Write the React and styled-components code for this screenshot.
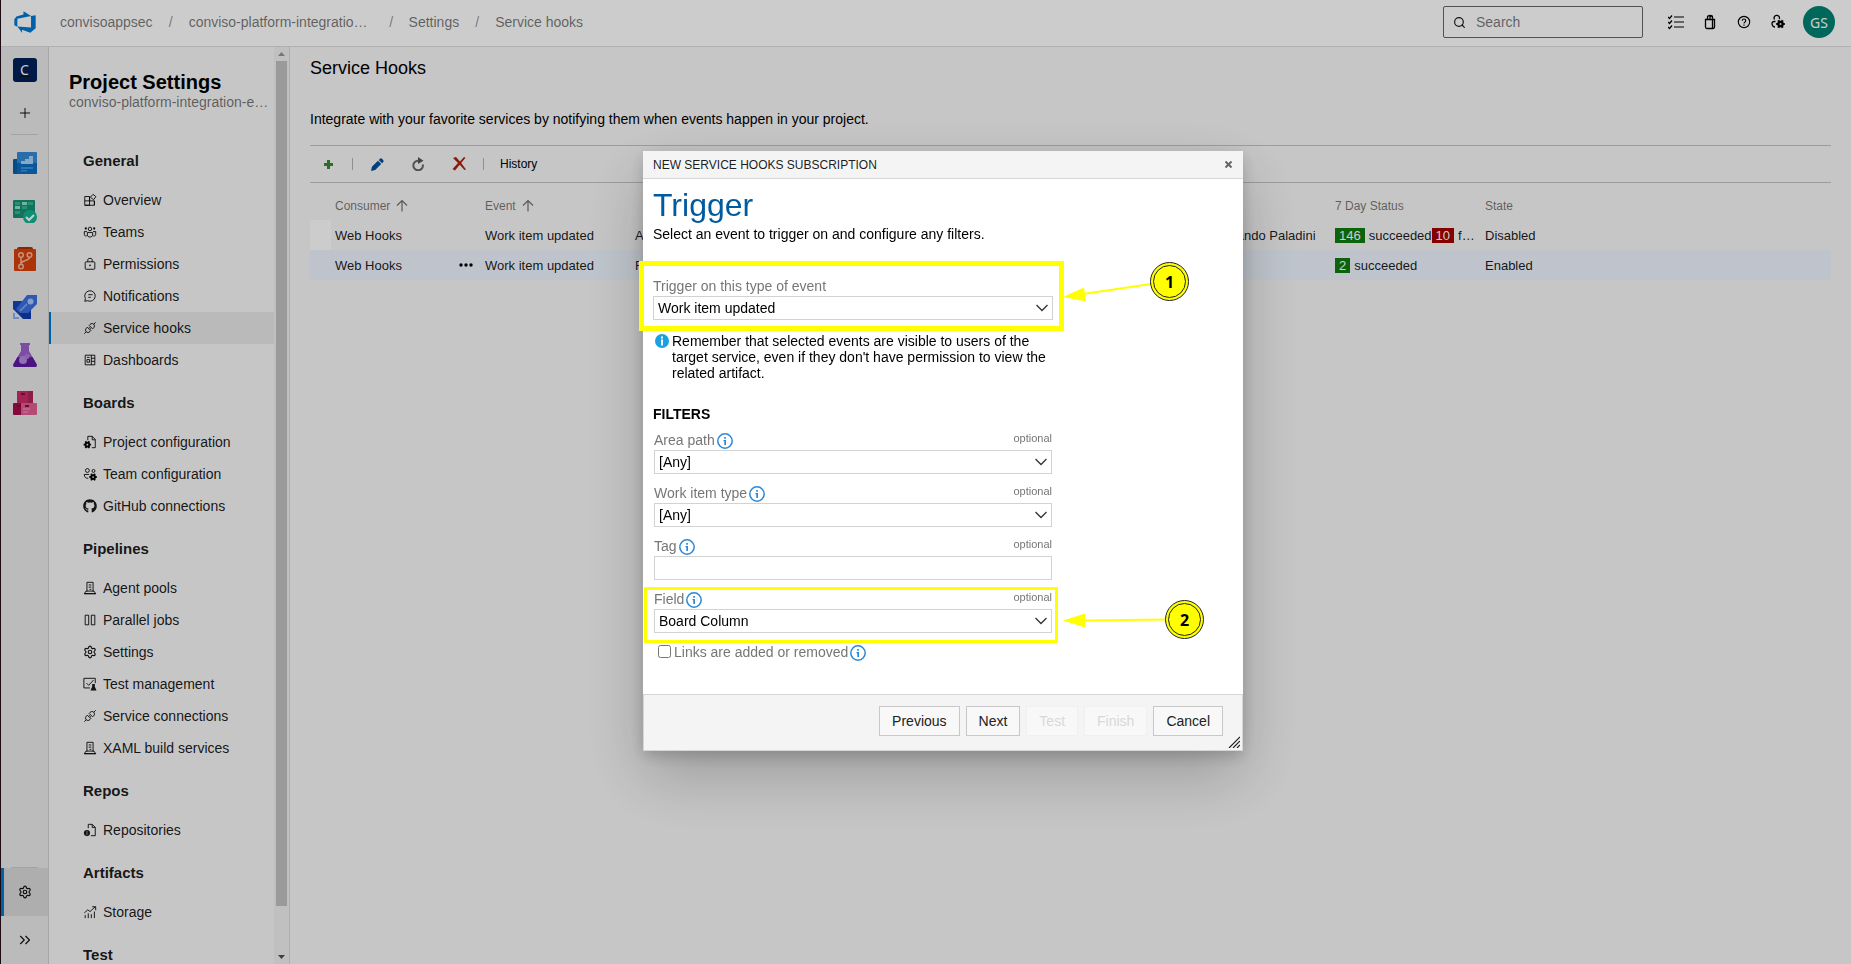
import React from "react";
import styled, { createGlobalStyle, css } from "styled-components";
import { Settings, Search, Plus, ChevronsRight } from "lucide-react";
import { FaGithub } from "react-icons/fa";

const GlobalStyle = createGlobalStyle`
  *, *::before, *::after { box-sizing: border-box; }
  body { margin: 0; font-family: "Liberation Sans", Arial, sans-serif; font-size: 14px; color: rgba(0, 0, 0, 0.9); }
  h1, h2, h3, p, ul { margin: 0; padding: 0; }
  ul { list-style: none; }
  button, input, select { font-family: inherit; font-size: 14px; }
  svg { display: block; flex: none; }
`;

/* ---------- frame ---------- */
const Shell = styled.div`
  height: 100vh;
  display: flex;
  flex-direction: column;
  overflow: hidden;
  background: #f8f8f8;
  border-left: 1px solid #1c0a14;
`;
const TopBar = styled.header`
  height: 47px;
  flex: none;
  display: flex;
  align-items: center;
  justify-content: space-between;
  padding: 0 16px 2px 12px;
  background: #fff;
  border-bottom: 1px solid #dcdcdc;
`;
const Body = styled.div`
  flex: 1;
  min-height: 0;
  display: flex;
`;

/* ---------- top bar ---------- */
const Crumbs = styled.nav`
  display: flex;
  align-items: center;
`;
const Logo = styled.a`
  margin-right: 23px;
`;
const Crumb = styled.a`
  color: rgba(0, 0, 0, 0.55);
  text-decoration: none;
  white-space: nowrap;
`;
const Slash = styled.span`
  width: ${(p) => (p.$wide ? 41 : 36)}px;
  text-align: center;
  padding-left: ${(p) => (p.$wide ? 6 : 0)}px;
  color: rgba(0, 0, 0, 0.45);
`;
const Tools = styled.div`
  display: flex;
  align-items: center;
`;
const SearchBox = styled.label`
  width: 200px;
  height: 32px;
  margin-right: 16px;
  padding: 0 9px;
  display: flex;
  align-items: center;
  gap: 10px;
  border: 1px solid rgba(0, 0, 0, 0.6);
  border-radius: 2px;
`;
const SearchInput = styled.input`
  flex: 1;
  min-width: 0;
  padding: 0;
  border: 0;
  outline: 0;
  background: none;
  &::placeholder { color: rgba(0, 0, 0, 0.55); }
`;
const ToolButton = styled.button`
  width: 34px;
  height: 32px;
  padding: 0;
  display: grid;
  place-items: center;
  border: 0;
  background: none;
  color: #000;
`;
const Avatar = styled.button`
  width: 32px;
  height: 32px;
  margin-left: 8px;
  padding: 0;
  border: 0;
  border-radius: 50%;
  background: #008272;
  color: #fff;
  font-family: "Noto Sans", sans-serif;
`;

/* ---------- icon rail ---------- */
const Rail = styled.nav`
  width: 48px;
  flex: none;
  display: flex;
  flex-direction: column;
  background: #eaeaea;
  border-right: 1px solid #d0d0d0;
`;
const RailLink = styled.a`
  height: ${(p) => p.$height || 48}px;
  flex: none;
  display: grid;
  place-items: center;
  color: #111;
  background: ${(p) => (p.$selected ? "#dadada" : "none")};
  box-shadow: ${(p) => (p.$selected ? "inset 3px 0 #0078d4" : "none")};
`;
const ProjectTile = styled.span`
  width: 24px;
  height: 24px;
  border-radius: 3px;
  background: #00215a;
  color: #fff;
  font: 14px/24px "Noto Sans", sans-serif;
  text-align: center;
`;
const RailRule = styled.span`
  width: 27px;
  height: 1px;
  margin: ${(p) => (p.$bottom ? "auto 10px 0" : "1px 10px 4px")};
  background: #ccc;
`;

/* ---------- settings side bar ---------- */
const Side = styled.aside`
  width: 241px;
  flex: none;
  display: flex;
  border-right: 1px solid #dcdcdc;
`;
const SideContent = styled.div`
  flex: 1;
  min-width: 0;
  overflow: hidden;
`;
const SideHead = styled.div`
  height: 87px;
  padding: 24px 5px 0 20px;
`;
const SideTitle = styled.h1`
  font-size: 20px;
  line-height: 23px;
  color: #000;
`;
const SideProject = styled.p`
  line-height: 17px;
  color: rgba(0, 0, 0, 0.55);
  white-space: nowrap;
`;
const GroupTitle = styled.h2`
  height: 50px;
  padding: 18px 0 0 34px;
  font-size: 15px;
  line-height: 18px;
`;
const NavItem = styled.a`
  height: 32px;
  padding-left: 34px;
  display: flex;
  align-items: center;
  gap: 6px;
  color: inherit;
  text-decoration: none;
  background: ${(p) => (p.$selected ? "#e9e9e9" : "none")};
  box-shadow: ${(p) => (p.$selected ? "inset 2px 0 #0078d4" : "none")};
`;
const ScrollBar = styled.div`
  width: 15px;
  display: flex;
  flex-direction: column;
  align-items: center;
  background: #f1f1f1;
`;
const ScrollArrow = styled.span`
  height: 14px;
  display: grid;
  place-items: center;
  color: ${(p) => (p.$dim ? "#949494" : "#505050")};
`;
const ScrollTrack = styled.div`
  flex: 1;
`;
const ScrollThumb = styled.div`
  width: 11px;
  height: 95%;
  background: #c1c1c1;
`;

/* ---------- main ---------- */
const Main = styled.main`
  flex: 1;
  min-width: 0;
  padding: 10px 20px 0;
`;
const PageTitle = styled.h2`
  font-size: 18px;
  line-height: 22px;
  font-weight: 400;
  color: #000;
`;
const Lead = styled.p`
  margin: 32px 0 18px;
  line-height: 16px;
  color: #000;
`;
const Toolbar = styled.div`
  height: 38px;
  display: flex;
  align-items: center;
  border: solid #c4c4c4;
  border-width: 1px 0;
`;
const ToolbarButton = styled.button`
  min-width: 36px;
  height: 30px;
  padding: 0;
  display: grid;
  place-items: center;
  border: 0;
  background: none;
  font-size: 12px;
  color: #000;
`;
const ToolbarRule = styled.span`
  width: 1px;
  height: 12px;
  margin: 0 ${(p) => p.$after || 0}px 0 6px;
  background: #b4b4b4;
`;
const ToolGroup = styled.div`
  display: flex;
  gap: 5px;
`;
const Table = styled.table`
  width: 100%;
  margin-top: 8px;
  table-layout: fixed;
  border-collapse: collapse;
`;
const Col = styled.col`
  width: ${(p) => (p.$width ? p.$width + "px" : "auto")};
`;
const HeadCell = styled.th`
  height: 29px;
  padding: 0 4px;
  text-align: left;
  font-size: 12px;
  font-weight: 400;
  color: rgba(0, 0, 0, 0.55);
`;
const Row = styled.tr`
  background: ${(p) => (p.$selected ? "#eff6ff" : "none")};
`;
const Cell = styled.td`
  height: 30px;
  padding: 0 4px;
  font-size: 13px;
  white-space: nowrap;
  overflow: hidden;
  text-overflow: ellipsis;
  background: ${(p) => (p.$light ? "#fff" : "none")};
`;
const Split = styled.div`
  display: flex;
  align-items: center;
  gap: 6px;
  justify-content: ${(p) => (p.$spread ? "space-between" : "flex-start")};
  padding-right: ${(p) => (p.$spread ? 4 : 0)}px;
`;
const Count = styled.span`
  display: inline-block;
  padding: 0 4px;
  margin-right: 4px;
  line-height: 15px;
  color: #fff;
  background: ${(p) => (p.$bad ? "#a80000" : "#107c10")};
`;

/* ---------- dialog ---------- */
const Overlay = styled.div`
  position: fixed;
  inset: 0 0 0 1px;
  display: flex;
  align-items: flex-start;
  justify-content: center;
  padding: 151px 0 0 34px;
  background: rgba(0, 0, 0, 0.2);
`;
const Dialog = styled.section`
  position: relative;
  width: 600px;
  background: #fff;
  box-shadow: 0 25px 58px rgba(0, 0, 0, 0.22), 0 5px 14px rgba(0, 0, 0, 0.18);
`;
const DialogBar = styled.header`
  height: 28px;
  padding: 0 10px;
  display: flex;
  align-items: center;
  justify-content: space-between;
  background: #f4f4f4;
  border-bottom: 1px solid #d6d6d6;
`;
const DialogTitle = styled.h2`
  font-size: 12px;
  font-weight: 400;
`;
const CloseButton = styled.button`
  width: 10px;
  height: 20px;
  padding: 0;
  display: grid;
  place-items: center;
  border: 0;
  background: none;
  color: #666;
`;
const DialogBody = styled.div`
  height: 515px;
  padding: 7px 10px 0;
  color: #000;
`;
const StepTitle = styled.h3`
  font-size: 32px;
  line-height: 38px;
  font-weight: 400;
  color: #005a9e;
`;
const StepText = styled.p`
  margin-top: 2px;
  line-height: 16px;
`;
const Form = styled.form`
  width: 400px;
`;
const marked = css`
  &::after {
    content: "";
    position: absolute;
    inset: ${(p) => p.$inset};
    border: ${(p) => p.$line}px solid #ff0;
    pointer-events: none;
  }
`;
const Field = styled.div`
  position: relative;
  height: ${(p) => p.$height || 53}px;
  ${(p) => p.$inset && marked}
`;
const EventField = styled(Field)`
  margin-top: 35px;
`;
const FieldHead = styled.div`
  height: 19px;
  display: flex;
  justify-content: space-between;
`;
const Label = styled.label`
  display: flex;
  align-items: center;
  gap: 2px;
  line-height: 17px;
  color: #767676;
`;
const Optional = styled.span`
  font-size: 11px;
  line-height: 15px;
  color: #767676;
`;
const control = css`
  width: 100%;
  height: 24px;
  display: block;
  margin: 0;
  padding: 0 4px;
  border: 1px solid #d2d2d2;
  border-radius: 0;
  background: #fff;
  color: #000;
`;
const TextInput = styled.input`
  ${control}
`;
const SelectInput = styled.select`
  ${control}
  appearance: none;
`;
const SelectWrap = styled.div`
  display: grid;
  align-items: center;
  > * { grid-area: 1 / 1; }
  > svg { justify-self: end; margin-right: 4px; pointer-events: none; }
`;
const Notice = styled.div`
  display: flex;
  gap: 3px;
  padding: 13px 0 0 2px;
  > svg { margin-top: 1px; }
`;
const NoticeText = styled.p`
  line-height: 16px;
`;
const Filters = styled.fieldset`
  margin: 25px 0 0;
  padding: 0;
  border: 0;
`;
const Legend = styled.legend`
  padding: 0;
  font-weight: 700;
  line-height: 16px;
`;
const FilterList = styled.div`
  padding: 9px 1px 0;
`;
const CheckRow = styled.div`
  display: flex;
  align-items: center;
  gap: 3px;
  padding: 1px 0 0 4px;
`;
const CheckBox = styled.input`
  width: 13px;
  height: 13px;
  margin: 0 0 3px;
`;
const DialogFoot = styled.footer`
  position: relative;
  height: 57px;
  display: flex;
  justify-content: flex-end;
  align-items: flex-start;
  gap: 6px;
  padding: 11px 19px 0;
  background: #f4f4f4;
  border: 1px solid #d6d6d6;
`;
const FootButton = styled.button`
  height: 30px;
  padding: 0 12px;
  border: 1px solid #c8c8c8;
  background: #f8f8f8;
  color: #212121;
  &:disabled { border-color: #f0f0f0; color: #d8d8d8; }
`;
const Grip = styled.span`
  position: absolute;
  right: 2px;
  bottom: 2px;
`;
const Pointer = styled.div`
  position: absolute;
  left: 420px;
  top: ${(p) => p.$top}px;
`;
const Bubble = styled.span`
  position: absolute;
  top: 0;
  left: ${(p) => p.$left}px;
  width: 39px;
  height: 39px;
  border: 4px double #222;
  border-radius: 50%;
  background: #ff0;
  color: #000;
  font: 700 16px/32px "Noto Sans", sans-serif;
  text-align: center;
`;

/* ---------- icons ---------- */
const Glyph = ({ children, size = 14, w = 1.2, box = 16 }) => (
  <svg width={size} height={size} viewBox={`0 0 ${box} ${box}`} fill="none" stroke="currentColor" strokeWidth={w} aria-hidden="true">
    {children}
  </svg>
);
const solid = { fill: "currentColor", stroke: "none" };
const Plug = (
  <path d="M1.500 14.500l2.200-2.200M12.300 3.700l2.200-2.200M3.700 12.300c-1.300-1.300-1-3 .3-4.300l1-1 4 4-1 1c-1.300 1.300-3 1.600-4.300.3zM12.300 3.700c1.300 1.300 1 3-.3 4.300l-1 1-4-4 1-1c1.300-1.300 3-1.600 4.300-.3zM6.500 8.500l1.300-1.300M7.800 9.800l1.300-1.300" />
);
const Server = (
  <>
    <path d="M4.500 12V1.500h7V12M3.500 11.500L1.500 14.500h13l-2-3zM1.500 14.500h13" />
    <path d="M6.500 4.500h3M6.500 7h3M7.500 9.500h2" />
  </>
);
const MiniGear = ({ x, y }) => (
  <>
    <circle cx={x} cy={y} r="3.3" {...solid} />
    <path d={`M${x - 4.3} ${y}h8.6M${x - 2.2} ${y - 3.8}l4.400 7.600M${x + 2.2} ${y - 3.8}l-4.400 7.600`} strokeWidth="2.200" />
    <circle cx={x} cy={y} r="1" fill="#eee" stroke="none" />
  </>
);
const navIcons = {
  overview: <path d="M2 4h5.500v10h-5.500zM2 9h11v5h-11M7.500 4.500v4.500M13 9v5M11.500 1.500l3.200 2.700-2.700 3.500-3.500-2.900z" />,
  teams: (
    <>
      <circle cx="8" cy="4.500" r="2" /><circle cx="3.200" cy="4" r="1.300" {...solid} /><circle cx="12.800" cy="4" r="1.300" {...solid} />
      <path d="M5 8.500h6v3c0 3-6 3-6 0zM4.500 7.500h-3v3.500c0 1.200 1.300 1.800 2.800 1.500M11.500 7.500h3v3.500c0 1.200-1.300 1.800-2.800 1.500" />
    </>
  ),
  lock: <><path d="M3.500 5.500h9a1 1 0 0 1 1 1v6.500a1 1 0 0 1-1 1h-9a1 1 0 0 1-1-1V6.500a1 1 0 0 1 1-1zM5.500 5.500v-2.500c0-2 5-2 5 0v2.500" /><circle cx="8" cy="9.500" r="1" {...solid} /></>,
  chat: <path d="M2 14l.8-3a6 6 0 1 1 2.600 2.400zM6 6.500h5M6 9.500h3" />,
  plug: Plug,
  board: <path d="M2.500 2.500h11v11h-11zM9.500 2.500v11M9.500 6h4M9.500 9.500h4M4.500 5h3M4.500 7.500h3v3h-3z" />,
  projectConfig: <><path d="M5.500 6V1.500h5l3.500 3.500v9.500h-4M10.500 1.500v4h3.500" /><MiniGear x={5} y={11} /></>,
  teamConfig: <><circle cx="5" cy="4" r="2.200" /><circle cx="12" cy="4.500" r="1.700" /><path d="M7 8.500h-5.500c0 3 1.500 4.500 4.500 4.500" /><MiniGear x={11.5} y={11.5} /></>,
  server: Server,
  parallel: <path d="M2.500 2.500h4v11h-4zM9.500 2.500h4v11h-4z" />,
  test: <><path d="M14 7V1.500h-13v11h7M4 7l2.500 2.500L12 3.500" /><path d="M10.500 8h3v3l2 4.500h-7l2-4.500z" {...solid} /></>,
  repo: <><path d="M6 6V1.500h4.500L14 5v9.500H9M10.500 1.500V5H14" /><circle cx="4.500" cy="11.500" r="3.500" {...solid} /><path d="M4.500 9v5" stroke="#999" /></>,
  storage: <path d="M1.500 9l4-3.500 2.500 2 6-5.500M10.500 2h4v4M2.500 11.500v3.500M6 9.500v5.500M9.500 10.500v4.500M13 7.500v7.500" />,
};
const NavIcon = ({ name }) => {
  if (name === "github") return <FaGithub size={14} aria-hidden="true" />;
  if (name === "gear") return <Settings size={14} strokeWidth={2} aria-hidden="true" />;
  return <Glyph w={1.1}>{navIcons[name]}</Glyph>;
};
const InfoRing = () => (
  <svg width="16" height="16" viewBox="0 0 16 16" aria-hidden="true">
    <circle cx="8" cy="8" r="7.200" fill="none" stroke="#2b88d8" strokeWidth="1.500" />
    <path d="M6.500 7H9v5H7.300V8.300h-.8zM7.200 4h1.700v1.700H7.200z" fill="#2b88d8" />
  </svg>
);
const Chevron = () => (
  <svg width="14" height="8" viewBox="0 0 14 8" aria-hidden="true">
    <path d="M1.500 1L7 6.500 12.500 1" fill="none" stroke="#333" strokeWidth="1.300" />
  </svg>
);
const SortArrow = () => (
  <svg width="12" height="13" viewBox="0 0 12 13" aria-hidden="true">
    <path d="M6 12.500V1.500M1 6.500l5-5 5 5" fill="none" stroke="currentColor" strokeWidth="1.200" />
  </svg>
);
const RailSvg = ({ children }) => <svg width="24" height="24" viewBox="0 0 24 24" aria-hidden="true">{children}</svg>;
const railIcons = [
  ["Overview", <><rect y="8" width="6" height="15" rx="1" fill="#0b5fa8" /><rect x="4" y="1" width="20" height="22" rx="1" fill="#338ad6" /><path d="M4 12h20v10a1 1 0 0 1-1 1H4z" fill="#0a6cc4" /><path d="M8 10h4V8h4V5h4v8H8z" fill="#a9d3f5" /><path d="M8 16h12v2H8zM8 19h6v1.500H8z" fill="#3f93dc" /></>],
  ["Boards", <><rect y="1" width="22" height="18" rx="1" fill="#178f72" /><path d="M2 3h5v3H2zM15 3h5v3h-5zM9 7h5v3H9zM2 12h5v3H2z" fill="#35b394" /><path d="M9 3h5v3H9zM2 7h5v3H2z" fill="#8fe0cb" /><circle cx="17" cy="18" r="7" fill="#12b391" /><path d="M13 18l3 3 5-5" fill="none" stroke="#fff" strokeWidth="2" /></>],
  ["Repos", <><path d="M4 2a2 2 0 0 1 2-2h12a2 2 0 0 1 2 2z" fill="#a53208" /><path d="M2 2h20a1 1 0 0 1 1 1v20a1 1 0 0 1-1 1H2a1 1 0 0 1-1-1V3a1 1 0 0 1 1-1z" fill="#d8420a" /><g fill="none" stroke="#f5b79f" strokeWidth="1.500"><circle cx="8" cy="8" r="2.300" /><circle cx="16.500" cy="8" r="2.300" /><circle cx="8" cy="19.500" r="2.300" /><path d="M8 10.500V17M16.500 10.500c0 3.500-8 2.500-8.300 6" /></g></>],
  ["Pipelines", <><path d="M0 6h9l9 9v9h-8L0 14z" fill="#1645b8" /><path d="M14 0h10v9L11 22 3 14z" fill="#3a6fe0" /><path d="M6 18h12v6h-7z" fill="#0f3aa8" /><circle cx="17.500" cy="6.500" r="3" fill="#a9c6fa" /><path d="M7 16l7-7" stroke="#8cb0f7" strokeWidth="1.500" /><path d="M0 18h2v4h4v2H0z" fill="#8cb0f7" /></>],
  ["Test Plans", <><path d="M7 0h10v2h-1v6l7.500 13c.8 1.500 0 3-1.500 3H2c-1.500 0-2.300-1.500-1.500-3L8 8V2H7z" fill="#9b62cc" /><path d="M4.500 14h15l4 7c.8 1.500 0 3-1.500 3H2c-1.500 0-2.300-1.500-1.500-3z" fill="#5f1aa0" /><circle cx="10" cy="17" r="4" fill="#b48be0" /><circle cx="14" cy="13.500" r="2.500" fill="#b07ed8" /></>],
  ["Artifacts", <><rect x="4" width="16" height="12" fill="#cc2c68" /><path d="M15 0h5v12h-5z" fill="#b3235a" /><rect y="12" width="9" height="12" rx="1" fill="#a50d4c" /><rect x="8" y="12" width="16" height="12" rx="1" fill="#e05f92" /><path d="M8 2h4v2H8zM4 14h4v2H4zM12 14h4v2h-4z" fill="#8c0b40" /><path d="M10 18h7M10 21h5" stroke="#f3a1c2" strokeWidth="1" /></>],
];

/* ---------- data ---------- */
const groups = [
  ["General", [["overview", "Overview"], ["teams", "Teams"], ["lock", "Permissions"], ["chat", "Notifications"], ["plug", "Service hooks"], ["board", "Dashboards"]]],
  ["Boards", [["projectConfig", "Project configuration"], ["teamConfig", "Team configuration"], ["github", "GitHub connections"]]],
  ["Pipelines", [["server", "Agent pools"], ["parallel", "Parallel jobs"], ["gear", "Settings"], ["test", "Test management"], ["plug", "Service connections"], ["server", "XAML build services"]]],
  ["Repos", [["repo", "Repositories"]]],
  ["Artifacts", [["storage", "Storage"]]],
  ["Test", []],
];

const SelectField = ({ id, value }) => (
  <SelectWrap>
    <SelectInput id={id} defaultValue={value}>
      <option>{value}</option>
    </SelectInput>
    <Chevron />
  </SelectWrap>
);

const FilterField = ({ id, label, value, ...mark }) => (
  <Field {...mark}>
    <FieldHead>
      <Label htmlFor={id}>{label}<InfoRing /></Label>
      <Optional>optional</Optional>
    </FieldHead>
    {value ? <SelectField id={id} value={value} /> : <TextInput id={id} type="text" />}
  </Field>
);

function Header() {
  return (
    <TopBar>
      <Crumbs aria-label="Breadcrumb">
        <Logo href="#" aria-label="Azure DevOps">
          <svg width="24" height="24" viewBox="0 0 18 18" aria-hidden="true">
            <path fill="#0078d4" d="M17 4v9.740l-4 3.280-6.200-2.260V17l-3.510-4.590 10.230.8V4.440zm-3.410.49L7.850 1v2.290L2.580 4.840 1 6.870v4.610l2.260 1V6.570z" />
          </svg>
        </Logo>
        <Crumb href="#">convisoappsec</Crumb><Slash>/</Slash>
        <Crumb href="#">conviso-platform-integratio…</Crumb><Slash $wide>/</Slash>
        <Crumb href="#">Settings</Crumb><Slash>/</Slash>
        <Crumb href="#">Service hooks</Crumb>
      </Crumbs>
      <Tools>
        <SearchBox>
          <Search size={13} strokeWidth={2.2} aria-hidden="true" />
          <SearchInput type="search" placeholder="Search" aria-label="Search" />
        </SearchBox>
        <ToolButton aria-label="Work items">
          <Glyph size={16}><path d="M6 3h10M6 8h10M6 13h10M0 3l1.500 1.500L4 1.500M0 8l1.500 1.500L4 6.500M0 13l1.500 1.500L4 11.500" /></Glyph>
        </ToolButton>
        <ToolButton aria-label="Marketplace">
          <Glyph size={16} w={1.3}><path d="M3.500 5.500h9v7.500a1.500 1.500 0 0 1-1.500 1.500H5a1.500 1.500 0 0 1-1.500-1.500zM5.500 5.500V3c0-2 5-2 5 0M8 5V3.500c0-2 2.500-2 2.500 0v11" /></Glyph>
        </ToolButton>
        <ToolButton aria-label="Help">
          <Glyph w={1.3}><circle cx="8" cy="8" r="6.500" /><path d="M6 6.500c0-2.500 4-2.500 4 0C10 8 8 8 8 9.700M8 10.800v1.400" /></Glyph>
        </ToolButton>
        <ToolButton aria-label="User settings">
          <Glyph size={16} w={1.3}><path d="M4.500 5.500a2.700 2.700 0 1 1 4.800-.5M5.500 7.500H4c-2 0-2.500 2-1.500 4 .5 1 1.500 1.500 2.500 1.500" /><MiniGear x={10.5} y={10} /></Glyph>
        </ToolButton>
        <Avatar aria-label="Account">GS</Avatar>
      </Tools>
    </TopBar>
  );
}

function IconRail() {
  return (
    <Rail aria-label="Project">
      <RailLink href="#" $height={46}><ProjectTile>C</ProjectTile></RailLink>
      <RailLink href="#" $height={40} aria-label="Add"><Plus size={16} strokeWidth={1.5} /></RailLink>
      <RailRule />
      {railIcons.map(([name, art]) => <RailLink key={name} href="#" aria-label={name}><RailSvg>{art}</RailSvg></RailLink>)}
      <RailRule $bottom />
      <RailLink href="#" $selected aria-label="Project settings"><Settings size={14} strokeWidth={2} /></RailLink>
      <RailLink href="#" aria-label="Expand"><ChevronsRight size={18} strokeWidth={1.5} /></RailLink>
    </Rail>
  );
}

function SideBar() {
  return (
    <Side>
      <SideContent>
        <SideHead>
          <SideTitle>Project Settings</SideTitle>
          <SideProject>conviso-platform-integration-e…</SideProject>
        </SideHead>
        {groups.map(([title, items]) => (
          <section key={title}>
            <GroupTitle>{title}</GroupTitle>
            <ul>
              {items.map(([icon, text]) => (
                <li key={text}>
                  <NavItem href="#" $selected={text === "Service hooks"}><NavIcon name={icon} />{text}</NavItem>
                </li>
              ))}
            </ul>
          </section>
        ))}
      </SideContent>
      <ScrollBar aria-hidden="true">
        <ScrollArrow $dim><svg width="7" height="4" viewBox="0 0 7 4"><path d="M0 4h7L3.500 0z" fill="currentColor" /></svg></ScrollArrow>
        <ScrollTrack><ScrollThumb /></ScrollTrack>
        <ScrollArrow><svg width="7" height="4" viewBox="0 0 7 4"><path d="M0 0h7L3.500 4z" fill="currentColor" /></svg></ScrollArrow>
      </ScrollBar>
    </Side>
  );
}

function HooksPage() {
  return (
    <Main>
      <PageTitle>Service Hooks</PageTitle>
      <Lead>Integrate with your favorite services by notifying them when events happen in your project.</Lead>
      <Toolbar>
        <ToolbarButton aria-label="Add"><svg width="9" height="9" viewBox="0 0 9 9"><path d="M3 0h3v3h3v3H6v3H3V6H0V3h3z" fill="#388a34" /></svg></ToolbarButton>
        <ToolbarRule $after={6} />
        <ToolGroup>
          <ToolbarButton aria-label="Edit"><svg width="13" height="13" viewBox="0 0 14 14"><path d="M0 14l1-4.500 6.500-6.500 3.500 3.500L4.500 13zM8.300 2.200L10 .5c1-.8 4.300 2.500 3.500 3.500l-1.700 1.700z" fill="#005299" /></svg></ToolbarButton>
          <ToolbarButton aria-label="Refresh"><svg width="14" height="14" viewBox="0 0 14 14"><path d="M11.800 7.500A4.800 4.800 0 1 1 7.500 3.700" fill="none" stroke="#666" strokeWidth="2" /><path d="M7 0l5.500 3.700L7 7z" fill="#555" /></svg></ToolbarButton>
          <ToolbarButton aria-label="Delete"><svg width="14" height="14" viewBox="0 0 14 14"><path d="M1 1l3-1 4 4.500L12 0l1.500.8L9.200 6l4.800 6.500-1.500.5L7.700 7.800 3 13.500.5 12 6 6z" fill="#b0200d" /></svg></ToolbarButton>
        </ToolGroup>
        <ToolbarRule $after={16} />
        <ToolbarButton>History</ToolbarButton>
      </Toolbar>
      <Table>
        <colgroup><Col $width={21} /><Col $width={150} /><Col $width={150} /><Col $width={575} /><Col $width={125} /><Col $width={150} /><Col /></colgroup>
        <thead>
          <tr>
            <HeadCell />
            <HeadCell><Split>Consumer<SortArrow /></Split></HeadCell>
            <HeadCell><Split>Event<SortArrow /></Split></HeadCell>
            <HeadCell />
            <HeadCell />
            <HeadCell>7 Day Status</HeadCell>
            <HeadCell>State</HeadCell>
          </tr>
        </thead>
        <tbody>
          <Row>
            <Cell $light />
            <Cell>Web Hooks</Cell>
            <Cell>Work item updated</Cell>
            <Cell>A</Cell>
            <Cell>Fernando Paladini</Cell>
            <Cell><Count>146</Count>succeeded<Count $bad>10</Count>f…</Cell>
            <Cell>Disabled</Cell>
          </Row>
          <Row $selected>
            <Cell />
            <Cell>
              <Split $spread>Web Hooks
                <svg width="14" height="4" viewBox="0 0 14 4"><circle cx="2" cy="2" r="1.700" /><circle cx="7" cy="2" r="1.700" /><circle cx="12" cy="2" r="1.700" /></svg>
              </Split>
            </Cell>
            <Cell>Work item updated</Cell>
            <Cell>F</Cell>
            <Cell />
            <Cell><Count>2</Count>succeeded</Cell>
            <Cell>Enabled</Cell>
          </Row>
        </tbody>
      </Table>
    </Main>
  );
}

function SubscriptionDialog() {
  return (
    <Overlay>
      <Dialog role="dialog" aria-labelledby="dialog-title">
        <DialogBar>
          <DialogTitle id="dialog-title">NEW SERVICE HOOKS SUBSCRIPTION</DialogTitle>
          <CloseButton aria-label="Close"><svg width="7" height="7" viewBox="0 0 7 7"><path d="M.5.5l6 6M6.500.5l-6 6" stroke="currentColor" strokeWidth="2" /></svg></CloseButton>
        </DialogBar>
        <DialogBody>
          <StepTitle>Trigger</StepTitle>
          <StepText>Select an event to trigger on and configure any filters.</StepText>
          <Form>
            <EventField $height={43} $inset="-16px -11px -11px -14px" $line={5}>
              <FieldHead><Label htmlFor="event">Trigger on this type of event</Label></FieldHead>
              <SelectField id="event" value="Work item updated" />
            </EventField>
            <Notice>
              <svg width="14" height="14" viewBox="0 0 14 14" aria-hidden="true"><circle cx="7" cy="7" r="7" fill="#1ba1e2" /><path d="M6 2.500h2v2H6zM6 5.500h2v6H6z" fill="#fff" /></svg>
              <NoticeText>Remember that selected events are visible to users of the target service, even if they don't have permission to view the related artifact.</NoticeText>
            </Notice>
            <Filters>
              <Legend>FILTERS</Legend>
              <FilterList>
                <FilterField id="area" label="Area path" value="[Any]" />
                <FilterField id="type" label="Work item type" value="[Any]" />
                <FilterField id="tag" label="Tag" />
                <FilterField id="field" label="Field" value="Board Column" $inset="-3px -6px 0 -10px" $line={3} />
                <CheckRow>
                  <CheckBox type="checkbox" id="links" />
                  <Label htmlFor="links">Links are added or removed<InfoRing /></Label>
                </CheckRow>
              </FilterList>
            </Filters>
          </Form>
        </DialogBody>
        <DialogFoot>
          <FootButton>Previous</FootButton>
          <FootButton>Next</FootButton>
          <FootButton disabled>Test</FootButton>
          <FootButton disabled>Finish</FootButton>
          <FootButton>Cancel</FootButton>
          <Grip><svg width="12" height="12" viewBox="0 0 12 12" aria-hidden="true"><path d="M1 12L12 1M5 12l7-7M9 12l3-3" stroke="#222" strokeWidth="1.200" /></svg></Grip>
        </DialogFoot>
        <Pointer $top={111}>
          <svg width="90" height="40" viewBox="0 0 90 40" aria-hidden="true"><path d="M20 32L88 22" stroke="#ff0" strokeWidth="2" /><path d="M0 35l21-9.500 2 14z" fill="#ff0" /></svg>
          <Bubble $left={87}>1</Bubble>
        </Pointer>
        <Pointer $top={449}>
          <svg width="105" height="40" viewBox="0 0 105 40" aria-hidden="true"><path d="M20 20.500L104 19.500" stroke="#ff0" strokeWidth="2" /><path d="M0 20.500l22-7v14z" fill="#ff0" /></svg>
          <Bubble $left={102}>2</Bubble>
        </Pointer>
      </Dialog>
    </Overlay>
  );
}

export default function App() {
  return (
    <>
      <GlobalStyle />
      <Shell>
        <Header />
        <Body>
          <IconRail />
          <SideBar />
          <HooksPage />
        </Body>
      </Shell>
      <SubscriptionDialog />
    </>
  );
}
